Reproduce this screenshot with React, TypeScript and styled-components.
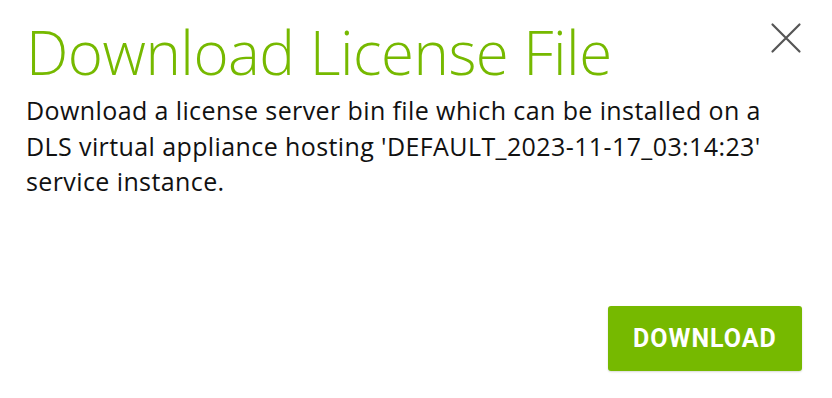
import React from "react";
import styled, { createGlobalStyle } from "styled-components";

const Global = createGlobalStyle`
  html, body { margin: 0; padding: 0; background: #fff; }
  body { width: 832px; height: 398px; overflow: hidden; }
`;

const Dialog = styled.div`
  position: relative;
  box-sizing: border-box;
  width: 832px;
  height: 398px;
  padding: 16px 30px 27px 26px;
  display: flex;
  flex-direction: column;
  background: #fff;
`;

const Title = styled.h1`
  margin: 0;
  font-family: "Open Sans", sans-serif;
  font-weight: 300;
  font-size: 60px;
  line-height: 72px;
  color: #76b900;
  letter-spacing: -0.5px;
`;

const Body = styled.p`
  margin: 5px 0 0 0;
  width: 780px;
  font-family: "Open Sans", sans-serif;
  font-weight: 400;
  font-size: 25px;
  line-height: 35.5px;
  letter-spacing: 0.4px;
  color: #111;
`;

const Footer = styled.div`
  margin-top: auto;
  display: flex;
  justify-content: flex-end;
`;

const PrimaryButton = styled.button`
  width: 194px;
  height: 65px;
  border: none;
  border-radius: 3px;
  background: #76b900;
  color: #fff;
  font-family: Roboto, "Open Sans", sans-serif;
  font-weight: 700;
  font-size: 25px;
  letter-spacing: 1px;
  box-shadow: 0 1px 2px rgba(0, 0, 0, 0.15);
  cursor: pointer;
`;

const CloseButton = styled.button`
  position: absolute;
  top: 21px;
  right: 29px;
  width: 34px;
  height: 34px;
  padding: 0;
  border: none;
  background: transparent;
  display: flex;
  align-items: center;
  justify-content: center;
  cursor: pointer;
`;

export default function App() {
  return (
    <>
      <Global />
      <Dialog>
        <CloseButton aria-label="Close">
          <svg width="32" height="32" viewBox="0 0 32 32">
            <path d="M2.5 2.5 L29.5 29.5 M29.5 2.5 L2.5 29.5" stroke="#555" strokeWidth="2.2" strokeLinecap="round" />
          </svg>
        </CloseButton>
        <Title>Download License File</Title>
        <Body>
          Download a license server bin file which can be installed on a DLS virtual appliance hosting
          'DEFAULT_2023-11-17_03:14:23' service instance.
        </Body>
        <Footer>
          <PrimaryButton>DOWNLOAD</PrimaryButton>
        </Footer>
      </Dialog>
    </>
  );
}
